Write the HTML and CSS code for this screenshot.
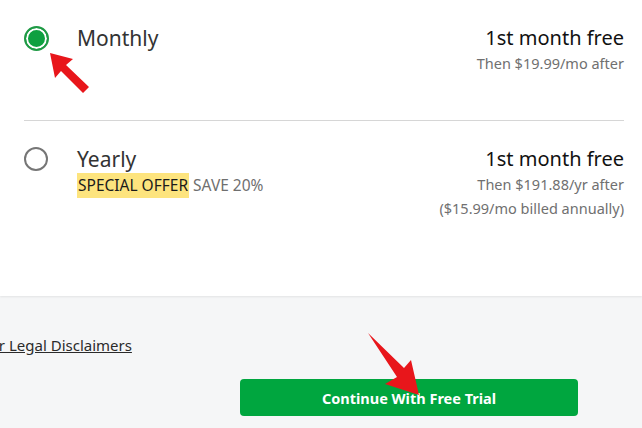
FILE: index.html
```html
<!DOCTYPE html>
<html>
  <head>
    <title>Choose a plan</title>
    <link rel="stylesheet" href="styles.css">
  </head>
  <body>
    <div class="plans">
      <label class="plan">
        <span class="radio radio_on"></span>
        <span class="plan_name">
          <span class="plan_title">Monthly</span>
        </span>
        <span class="plan_price">
          <span class="price_main">1st month free</span>
          <span class="price_sub">Then $19.99/mo after</span>
        </span>
      </label>
      <label class="plan">
        <span class="radio"></span>
        <span class="plan_name">
          <span class="plan_title">Yearly</span>
          <span class="offer"><span class="offer_tag">SPECIAL OFFER</span> SAVE 20%</span>
        </span>
        <span class="plan_price">
          <span class="price_main">1st month free</span>
          <span class="price_sub">Then $191.88/yr after</span>
          <span class="price_sub">($15.99/mo billed annually)</span>
        </span>
      </label>
    </div>
    <div class="footer">
      <a class="legal" href="#">Other Legal Disclaimers</a>
      <div class="actions">
        <button class="continue">Continue With Free Trial</button>
      </div>
    </div>

    <!-- annotation arrows -->
    <svg class="arrow arrow_one" width="46" height="42" viewBox="0 0 46 42">
      <path d="M1 1 L24 7 L17 13 L40 35 L34 41 L12 19 L6 26 Z" fill="#e8161b"/>
    </svg>
    <svg class="arrow arrow_two" width="64" height="66" viewBox="0 0 64 66">
      <path d="M2 2 L38 37 L45 29 L53 64 L19 53 L31 46 Z" fill="#e8161b"/>
    </svg>
  </body>
</html>
```

FILE: styles.css
```css
body {
  margin: 0;
  font-family: "Noto Sans", "Open Sans", sans-serif;
  color: #2b2b2b;
  background: #f5f6f7;
  overflow: hidden;
}

.plans {
  background: #fff;
  padding: 0 18px 0 24px;
  height: 296px;
  box-sizing: border-box;
  box-shadow: 0 1px 2px rgba(0, 0, 0, 0.08);
}

.plan {
  display: flex;
  align-items: flex-start;
  padding: 24px 0 45px;
}
.plan + .plan {
  border-top: 1px solid #d6d6d6;
  padding: 24px 0 0;
}

.radio {
  width: 24px;
  height: 24px;
  border: 2px solid #767676;
  border-radius: 50%;
  box-sizing: border-box;
  margin-top: 2px;
  flex-shrink: 0;
}
.radio_on {
  width: 25px;
  height: 25px;
  margin-top: 2px;
  border-color: #1f9a45;
  background: #0ea040;
  box-shadow: inset 0 0 0 2px #fff;
}
.radio_on + .plan_name { margin-left: 28px; }

.plan_name {
  display: flex;
  flex-direction: column;
  margin-left: 29px;
  flex: 1;
}
.plan_title {
  font-size: 21px;
  line-height: 28px;
  color: #333;
}
.offer {
  font-size: 15.5px;
  line-height: 25px;
  color: #6f6f6f;
}
.offer_tag {
  display: inline-block;
  background: #fde47e;
  color: #1b1b1b;
  padding: 0 1px;
}

.plan_price {
  display: flex;
  flex-direction: column;
  align-items: flex-end;
}
.price_main {
  font-size: 20px;
  line-height: 27px;
  color: #111;
}
.price_sub {
  font-size: 14.5px;
  line-height: 24px;
  color: #707070;
}

.footer {
  padding: 38px 64px 0 0;
}
.legal {
  display: inline-block;
  margin-left: -36px;
  font-size: 15px;
  color: #2b2b2b;
}
.actions {
  display: flex;
  justify-content: flex-end;
  margin-top: 23px;
}
.continue {
  width: 338px;
  height: 37px;
  border: none;
  border-radius: 4px;
  background: #00a63f;
  color: #fff;
  font-family: "Noto Sans", "Open Sans", sans-serif;
  font-size: 14.5px;
  font-weight: bold;
}

.arrow { position: absolute; }
.arrow_one { left: 49px; top: 52px; }
.arrow_two { left: 366px; top: 331px; }
```
